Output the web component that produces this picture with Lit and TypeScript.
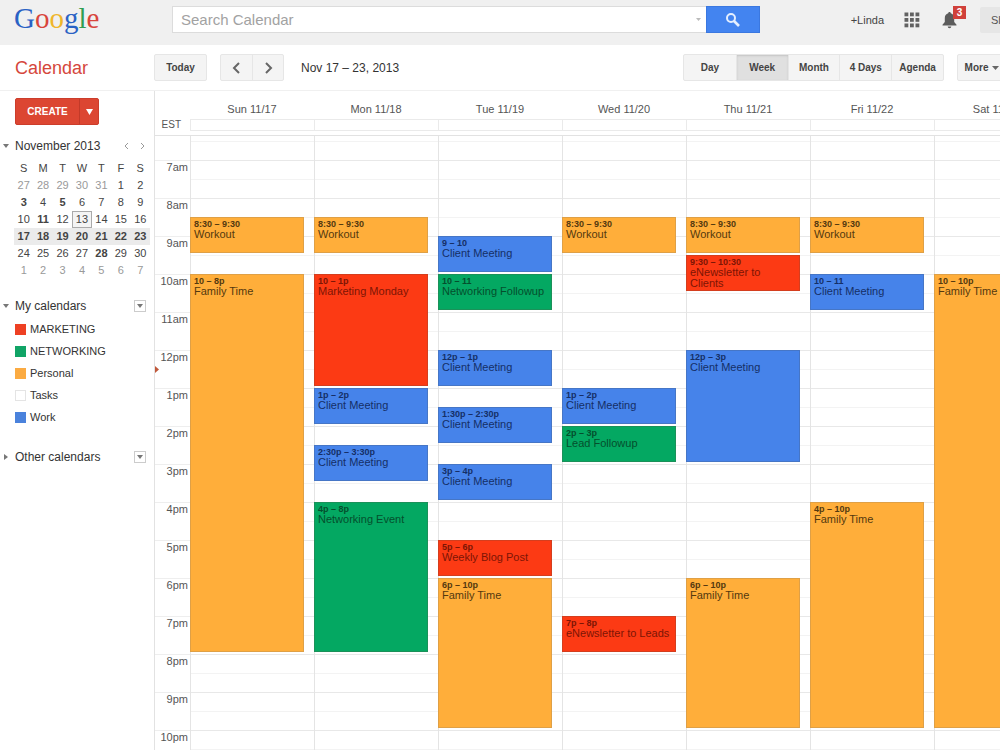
import { LitElement, html, css, svg } from "lit";
import { customElement } from "lit/decorators.js";
import { classMap } from "lit/directives/class-map.js";

type Kind = "personal" | "marketing" | "networking" | "work";

interface CalendarEvent {
  start: number;
  end: number;
  time: string;
  title: string;
  kind: Kind;
}

interface Day {
  label: string;
  events: CalendarEvent[];
}

const ev = (start: number, end: number, time: string, title: string, kind: Kind): CalendarEvent => ({
  start,
  end,
  time,
  title,
  kind,
});

const FIRST_HOUR = 6.5;
const LAST_HOUR = 23;
const toRow = (hour: number) => (hour - FIRST_HOUR) * 2 + 1;

const DAYS: Day[] = [
  {
    label: "Sun 11/17",
    events: [
      ev(8.5, 9.5, "8:30 – 9:30", "Workout", "personal"),
      ev(10, 20, "10 – 8p", "Family Time", "personal"),
    ],
  },
  {
    label: "Mon 11/18",
    events: [
      ev(8.5, 9.5, "8:30 – 9:30", "Workout", "personal"),
      ev(10, 13, "10 – 1p", "Marketing Monday", "marketing"),
      ev(13, 14, "1p – 2p", "Client Meeting", "work"),
      ev(14.5, 15.5, "2:30p – 3:30p", "Client Meeting", "work"),
      ev(16, 20, "4p – 8p", "Networking Event", "networking"),
    ],
  },
  {
    label: "Tue 11/19",
    events: [
      ev(9, 10, "9 – 10", "Client Meeting", "work"),
      ev(10, 11, "10 – 11", "Networking Followup", "networking"),
      ev(12, 13, "12p – 1p", "Client Meeting", "work"),
      ev(13.5, 14.5, "1:30p – 2:30p", "Client Meeting", "work"),
      ev(15, 16, "3p – 4p", "Client Meeting", "work"),
      ev(17, 18, "5p – 6p", "Weekly Blog Post", "marketing"),
      ev(18, 22, "6p – 10p", "Family Time", "personal"),
    ],
  },
  {
    label: "Wed 11/20",
    events: [
      ev(8.5, 9.5, "8:30 – 9:30", "Workout", "personal"),
      ev(13, 14, "1p – 2p", "Client Meeting", "work"),
      ev(14, 15, "2p – 3p", "Lead Followup", "networking"),
      ev(19, 20, "7p – 8p", "eNewsletter to Leads", "marketing"),
    ],
  },
  {
    label: "Thu 11/21",
    events: [
      ev(8.5, 9.5, "8:30 – 9:30", "Workout", "personal"),
      ev(9.5, 10.5, "9:30 – 10:30", "eNewsletter to Clients", "marketing"),
      ev(12, 15, "12p – 3p", "Client Meeting", "work"),
      ev(18, 22, "6p – 10p", "Family Time", "personal"),
    ],
  },
  {
    label: "Fri 11/22",
    events: [
      ev(8.5, 9.5, "8:30 – 9:30", "Workout", "personal"),
      ev(10, 11, "10 – 11", "Client Meeting", "work"),
      ev(16, 22, "4p – 10p", "Family Time", "personal"),
    ],
  },
  {
    label: "Sat 11/23",
    events: [ev(10, 22, "10 – 10p", "Family Time", "personal")],
  },
];

const HOURS = Array.from({ length: 16 }, (_, i) => i + 7);
const hourLabel = (h: number) => (h < 12 ? `${h}am` : `${h === 12 ? 12 : h - 12}pm`);

const WEEKS = [
  [27, 28, 29, 30, 31, 1, 2],
  [3, 4, 5, 6, 7, 8, 9],
  [10, 11, 12, 13, 14, 15, 16],
  [17, 18, 19, 20, 21, 22, 23],
  [24, 25, 26, 27, 28, 29, 30],
  [1, 2, 3, 4, 5, 6, 7],
];
const BUSY = [3, 5, 11, 28];

const CALENDARS = [
  { name: "MARKETING", kind: "marketing", on: true },
  { name: "NETWORKING", kind: "networking", on: true },
  { name: "Personal", kind: "personal", on: true },
  { name: "Tasks", kind: "tasks", on: false },
  { name: "Work", kind: "work", on: true },
];

const VIEWS = ["Day", "Week", "Month", "4 Days", "Agenda"];

const base = css`
  * {
    box-sizing: border-box;
  }
  button,
  input {
    font: inherit;
    color: inherit;
    margin: 0;
    padding: 0;
    border: 0;
    background: none;
  }
  button {
    cursor: pointer;
  }
  svg {
    display: block;
  }
`;

@customElement("top-bar")
export class TopBar extends LitElement {
  static styles = [
    base,
    css`
      :host {
        display: flex;
        align-items: center;
        height: 45px;
        padding: 0 22px 6px 14px;
        background: #f0f0f0;
      }
      .logo {
        width: 158px;
        padding-bottom: 4px;
        font: 29px/32px "Liberation Serif", serif;
        text-decoration: none;
      }
      .blue {
        color: #2a62c4;
      }
      .red {
        color: #d8453c;
      }
      .yellow {
        color: #efb52a;
      }
      .green {
        color: #2f9e52;
      }
      .search {
        display: flex;
        flex: 0 1 588px;
        height: 27px;
      }
      .box {
        display: flex;
        flex: 1;
        align-items: center;
        padding: 0 4px 0 8px;
        background: #fff;
        border: 1px solid #dcdcdc;
        border-right: 0;
      }
      .box input {
        flex: 1;
        min-width: 0;
        height: 25px;
        font-size: 15px;
        outline: 0;
      }
      .box input::placeholder {
        color: #a2a2a2;
        opacity: 1;
      }
      .go {
        display: grid;
        place-items: center;
        width: 54px;
        background: #4384f0;
        border: 1px solid #3b78e0;
      }
      .right {
        display: flex;
        align-items: center;
        gap: 20px;
        margin-left: auto;
      }
      .user {
        color: #444;
        text-decoration: none;
      }
      .bell {
        position: relative;
        width: 18px;
      }
      .badge {
        position: absolute;
        left: 11px;
        top: -5px;
        width: 13px;
        height: 13px;
        background: #d0403a;
        color: #fff;
        font-size: 10px;
        line-height: 13px;
        font-weight: bold;
        text-align: center;
      }
      .share {
        width: 56px;
        height: 26px;
        padding: 0 11px;
        text-align: left;
        background: #e6e6e6;
        color: #555;
        border-radius: 2px;
      }
    `,
  ];

  render() {
    return html`
      <a class="logo" href="#" aria-label="Google"
        ><span class="blue">G</span><span class="red">o</span><span class="yellow">o</span
        ><span class="blue">g</span><span class="green">l</span><span class="red">e</span></a
      >
      <form class="search">
        <div class="box">
          <input type="text" aria-label="Search Calendar" placeholder="Search Calendar" />
          <button type="button" aria-label="Search options">
            <svg width="7" height="5" viewBox="0 0 7 5"><path d="M1 1h5L3.500 4z" fill="#bbb" /></svg>
          </button>
        </div>
        <button class="go" type="button" aria-label="Search">
          <svg width="16" height="16" viewBox="0 0 16 16" fill="none" stroke="#e4efff">
            <circle cx="6" cy="6" r="4" stroke-width="2" />
            <path d="M9 9l5 5" stroke-width="2.600" />
          </svg>
        </button>
      </form>
      <div class="right">
        <a class="user" href="#">+Linda</a>
        <button type="button" aria-label="Apps">
          <svg width="18" height="16" viewBox="0 0 18 16" fill="#626262">
            ${[0, 1, 2].map((r) =>
              [0, 1, 2].map((c) => svg`<rect x=${0.5 + c * 5.5} y=${0.5 + r * 5.5} width="3.800" height="3.800" />`),
            )}
          </svg>
        </button>
        <button class="bell" type="button" aria-label="Notifications">
          <svg width="16" height="18" viewBox="0 0 16 18" fill="#5c5c5c">
            <path
              d="M7.500 1c.8 0 1.300.6 1.300 1.300 2.200.6 3.400 2.300 3.400 4.700v4l2.300 2.800v.7H.5v-.7L2.800 11V7c0-2.400 1.200-4.100 3.400-4.700C6.200 1.600 6.700 1 7.500 1z"
            />
            <path d="M5.700 15.500h3.600a1.800 1.800 0 0 1-3.600 0z" />
          </svg>
          <span class="badge">3</span>
        </button>
        <button class="share" type="button">Share</button>
      </div>
    `;
  }
}

@customElement("calendar-toolbar")
export class CalendarToolbar extends LitElement {
  static styles = [
    base,
    css`
      :host {
        display: flex;
        align-items: center;
        height: 46px;
        padding: 0 51px 0 15px;
        border-bottom: 1px solid #f0f0f0;
      }
      .title {
        width: 139px;
        margin: 0;
        font-size: 18px;
        line-height: 24px;
        font-weight: normal;
        color: #d5473c;
      }
      .group {
        display: grid;
        grid-auto-flow: column;
        grid-auto-columns: 1fr;
        height: 27px;
        background: #f4f4f4;
        border: 1px solid #e6e6e6;
        border-radius: 2px;
        font-size: 10px;
        font-weight: bold;
        color: #444;
      }
      .group button {
        display: flex;
        align-items: center;
        justify-content: center;
        gap: 4px;
      }
      .group button + button {
        border-left: 1px solid #e6e6e6;
      }
      .group .active {
        background: #e0e0e0;
        box-shadow: inset 0 1px 2px #c4c4c4;
      }
      .today {
        width: 53px;
      }
      .nav {
        width: 64px;
        margin: 0 17px 0 13px;
      }
      .range {
        font-size: 12px;
        color: #333;
      }
      .views {
        width: 261px;
        margin: 0 13px 0 auto;
      }
      .more {
        width: 50px;
      }
    `,
  ];

  render() {
    return html`
      <h1 class="title">Calendar</h1>
      <div class="group today"><button type="button">Today</button></div>
      <div class="group nav">
        <button type="button" aria-label="Previous week">
          <svg width="9" height="12" viewBox="0 0 9 12" fill="none" stroke="#666" stroke-width="2">
            <path d="M7 1L2 6l5 5" />
          </svg>
        </button>
        <button type="button" aria-label="Next week">
          <svg width="9" height="12" viewBox="0 0 9 12" fill="none" stroke="#666" stroke-width="2">
            <path d="M2 1l5 5-5 5" />
          </svg>
        </button>
      </div>
      <span class="range">Nov 17 – 23, 2013</span>
      <div class="group views">
        ${VIEWS.map((v) => html`<button type="button" class=${classMap({ active: v === "Week" })}>${v}</button>`)}
      </div>
      <div class="group more">
        <button type="button">
          More<svg width="7" height="4" viewBox="0 0 7 4"><path d="M0 0h7L3.500 4z" fill="#666" /></svg>
        </button>
      </div>
    `;
  }
}

@customElement("side-panel")
export class SidePanel extends LitElement {
  static styles = [
    base,
    css`
      :host {
        display: block;
        padding: 7px 4px 0 0;
      }
      .create {
        display: flex;
        width: 84px;
        height: 27px;
        margin-left: 15px;
        background: #dc4632;
        border: 1px solid #cc3d2b;
        border-radius: 2px;
        color: #fff;
        font-size: 10px;
        font-weight: bold;
      }
      .create button {
        flex: 1;
      }
      .create .drop {
        display: grid;
        place-items: center;
        flex: 0 0 19px;
        border-left: 1px solid #c23a29;
      }
      .head {
        display: grid;
        grid-template-columns: 6px 1fr auto;
        column-gap: 6px;
        align-items: center;
        height: 18px;
        padding: 0 4px 0 3px;
        font-size: 12px;
        color: #333;
      }
      .head h2 {
        margin: 0;
        font-size: 12px;
        font-weight: normal;
      }
      .month {
        margin: 12px 0 5px;
      }
      .mine {
        margin: 18px 0 3px;
      }
      .other {
        margin-top: 20px;
      }
      .pager {
        display: flex;
        gap: 11px;
        padding-right: 1px;
      }
      .menu {
        display: grid;
        place-items: center;
        width: 12px;
        height: 12px;
        border: 1px solid #ccc;
      }
      .mini {
        width: 136px;
        margin-left: 14px;
        border-collapse: collapse;
        table-layout: fixed;
        text-align: center;
        color: #444;
      }
      .mini th,
      .mini td {
        height: 17px;
        padding: 0;
        line-height: 15px;
        font-weight: normal;
      }
      .mini .dim {
        color: #999;
      }
      .mini .busy {
        font-weight: bold;
      }
      .mini .week {
        background: #ebebeb;
      }
      .mini .now {
        background: #f4f4f4;
        box-shadow: inset 0 0 0 1px #aaa;
      }
      .list {
        margin: 0 0 0 15px;
        padding: 0;
        list-style: none;
        color: #333;
      }
      .list label {
        display: flex;
        align-items: center;
        gap: 4px;
        height: 22px;
      }
      .list input {
        appearance: none;
        width: 11px;
        height: 11px;
      }
      .marketing {
        background: #ee4023;
      }
      .networking {
        background: #11a466;
      }
      .personal {
        background: #fbab42;
      }
      .tasks {
        border: 1px solid #e4e4e4;
      }
      .work {
        background: #4a82dc;
      }
    `,
  ];

  private menuButton(label: string) {
    return html`<button class="menu" type="button" aria-label=${label}>
      <svg width="6" height="4" viewBox="0 0 6 4"><path d="M0 0h6L3 4z" fill="#777" /></svg>
    </button>`;
  }

  private down = html`<svg width="6" height="4" viewBox="0 0 6 4"><path d="M0 0h6L3 4z" fill="#777" /></svg>`;

  render() {
    return html`
      <div class="create">
        <button type="button">CREATE</button>
        <button class="drop" type="button" aria-label="Quick add">
          <svg width="7" height="6" viewBox="0 0 7 6"><path d="M0 0h7L3.500 6z" fill="#fff" /></svg>
        </button>
      </div>

      <div class="head month">
        ${this.down}
        <h2>November 2013</h2>
        <div class="pager">
          <button type="button" aria-label="Previous month">
            <svg width="5" height="8" viewBox="0 0 5 8" fill="none" stroke="#999"><path d="M4 1L1 4l3 3" /></svg>
          </button>
          <button type="button" aria-label="Next month">
            <svg width="5" height="8" viewBox="0 0 5 8" fill="none" stroke="#999"><path d="M1 1l3 3-3 3" /></svg>
          </button>
        </div>
      </div>
      <table class="mini">
        <thead>
          <tr>
            ${["S", "M", "T", "W", "T", "F", "S"].map((d) => html`<th scope="col">${d}</th>`)}
          </tr>
        </thead>
        <tbody>
          ${WEEKS.map(
            (week, w) => html`<tr class=${classMap({ week: w === 3 })}>
              ${week.map((d) => {
                const dim = (w === 0 && d > 7) || w === 5;
                return html`<td
                  class=${classMap({
                    dim,
                    busy: w === 3 || (!dim && BUSY.includes(d)),
                    now: w === 2 && d === 13,
                  })}
                >
                  ${d}
                </td>`;
              })}
            </tr>`,
          )}
        </tbody>
      </table>

      <div class="head mine">
        ${this.down}
        <h2>My calendars</h2>
        ${this.menuButton("My calendars menu")}
      </div>
      <ul class="list">
        ${CALENDARS.map(
          (c) => html`<li>
            <label><input type="checkbox" class=${c.kind} .checked=${c.on} />${c.name}</label>
          </li>`,
        )}
      </ul>

      <div class="head other">
        <svg width="6" height="6" viewBox="0 0 6 6"><path d="M1 0l4 3-4 3z" fill="#777" /></svg>
        <h2>Other calendars</h2>
        ${this.menuButton("Other calendars menu")}
      </div>
    `;
  }
}

@customElement("week-grid")
export class WeekGrid extends LitElement {
  static styles = [
    base,
    css`
      :host {
        display: block;
        border-left: 1px solid #e2e2e2;
        color: #555;
      }
      .cols {
        display: grid;
        grid-template-columns: 35px repeat(7, minmax(124px, 1fr));
      }
      .names {
        padding-top: 8px;
        line-height: 20px;
        text-align: center;
      }
      .allday {
        height: 17px;
        padding-bottom: 4px;
        border-bottom: 1px solid #e2e2e2;
      }
      .zone {
        padding-right: 9px;
        font-size: 10px;
        line-height: 12px;
        text-align: right;
      }
      .slot {
        border: solid #eaeaea;
        border-width: 1px 0 1px 1px;
      }
      .track {
        display: grid;
        grid-auto-rows: 19px;
        padding-top: 5px;
        background:
          linear-gradient(#e4e4e4, #e4e4e4) 0 0 / 1px 100% no-repeat padding-box,
          repeating-linear-gradient(#f3f3f3 0 1px, transparent 1px 19px, #e8e8e8 19px 20px, transparent 20px 38px)
            content-box border-box;
      }
      .hours {
        background: repeating-linear-gradient(transparent 0 19px, #eee 19px 20px, transparent 20px 38px)
          content-box border-box;
      }
      .hour {
        grid-column: 1;
        padding-right: 2px;
        line-height: 15px;
        text-align: right;
      }
      .now {
        grid-column: 1;
        align-self: center;
      }
      .event {
        grid-column: 1;
        margin: 0 10px 2px 0;
        padding: 2px 4px 0;
        overflow: hidden;
        line-height: 11px;
      }
      .event time {
        display: block;
        font-size: 9px;
        line-height: 10px;
        font-weight: bold;
      }
      .event h3 {
        margin: 0;
        font-size: 11px;
        font-weight: normal;
      }
      .personal {
        background: #ffae3a;
        box-shadow: inset 0 0 0 1px #dfa046;
        color: #54390f;
      }
      .marketing {
        background: #fc3a14;
        box-shadow: inset 0 0 0 1px #d43e1e;
        color: #7c1505;
      }
      .networking {
        background: #04a862;
        box-shadow: inset 0 0 0 1px #1b9159;
        color: #044f2d;
      }
      .work {
        background: #4683ea;
        box-shadow: inset 0 0 0 1px #4676c6;
        color: #152f66;
      }
    `,
  ];

  render() {
    return html`
      <div class="cols names">
        <span></span>
        ${DAYS.map((d) => html`<span>${d.label}</span>`)}
      </div>
      <div class="cols allday">
        <span class="zone">EST</span>
        ${DAYS.map(() => html`<div class="slot"></div>`)}
      </div>
      <div class="cols">
        <div class="track hours">
          ${HOURS.map((h) => html`<span class="hour" style="grid-row:${toRow(h)}">${hourLabel(h)}</span>`)}
          <svg class="now" style="grid-row:${toRow(12)} / ${toRow(13)}" width="4" height="7" viewBox="0 0 4 7">
            <path d="M0 0l4 3.500L0 7z" fill="#c0583a" />
          </svg>
        </div>
        ${DAYS.map(
          (d) => html`<div class="track" style="grid-template-rows:repeat(${toRow(LAST_HOUR) - 1},19px)">
            ${d.events.map(
              (e) => html`<article class="event ${e.kind}" style="grid-row:${toRow(e.start)} / ${toRow(e.end)}">
                <time>${e.time}</time>
                <h3>${e.title}</h3>
              </article>`,
            )}
          </div>`,
        )}
      </div>
    `;
  }
}

@customElement("app-root")
export class AppRoot extends LitElement {
  static styles = [
    base,
    css`
      :host {
        display: block;
        height: 100vh;
        overflow: hidden;
        background: #fff;
        font: 11px/16px "Liberation Sans", Arial, sans-serif;
      }
      .page {
        min-width: 1058px;
      }
      .main {
        display: grid;
        grid-template-columns: 154px 1fr;
      }
    `,
  ];

  render() {
    return html`
      <div class="page">
        <top-bar></top-bar>
        <calendar-toolbar></calendar-toolbar>
        <main class="main">
          <side-panel></side-panel>
          <week-grid></week-grid>
        </main>
      </div>
    `;
  }
}
